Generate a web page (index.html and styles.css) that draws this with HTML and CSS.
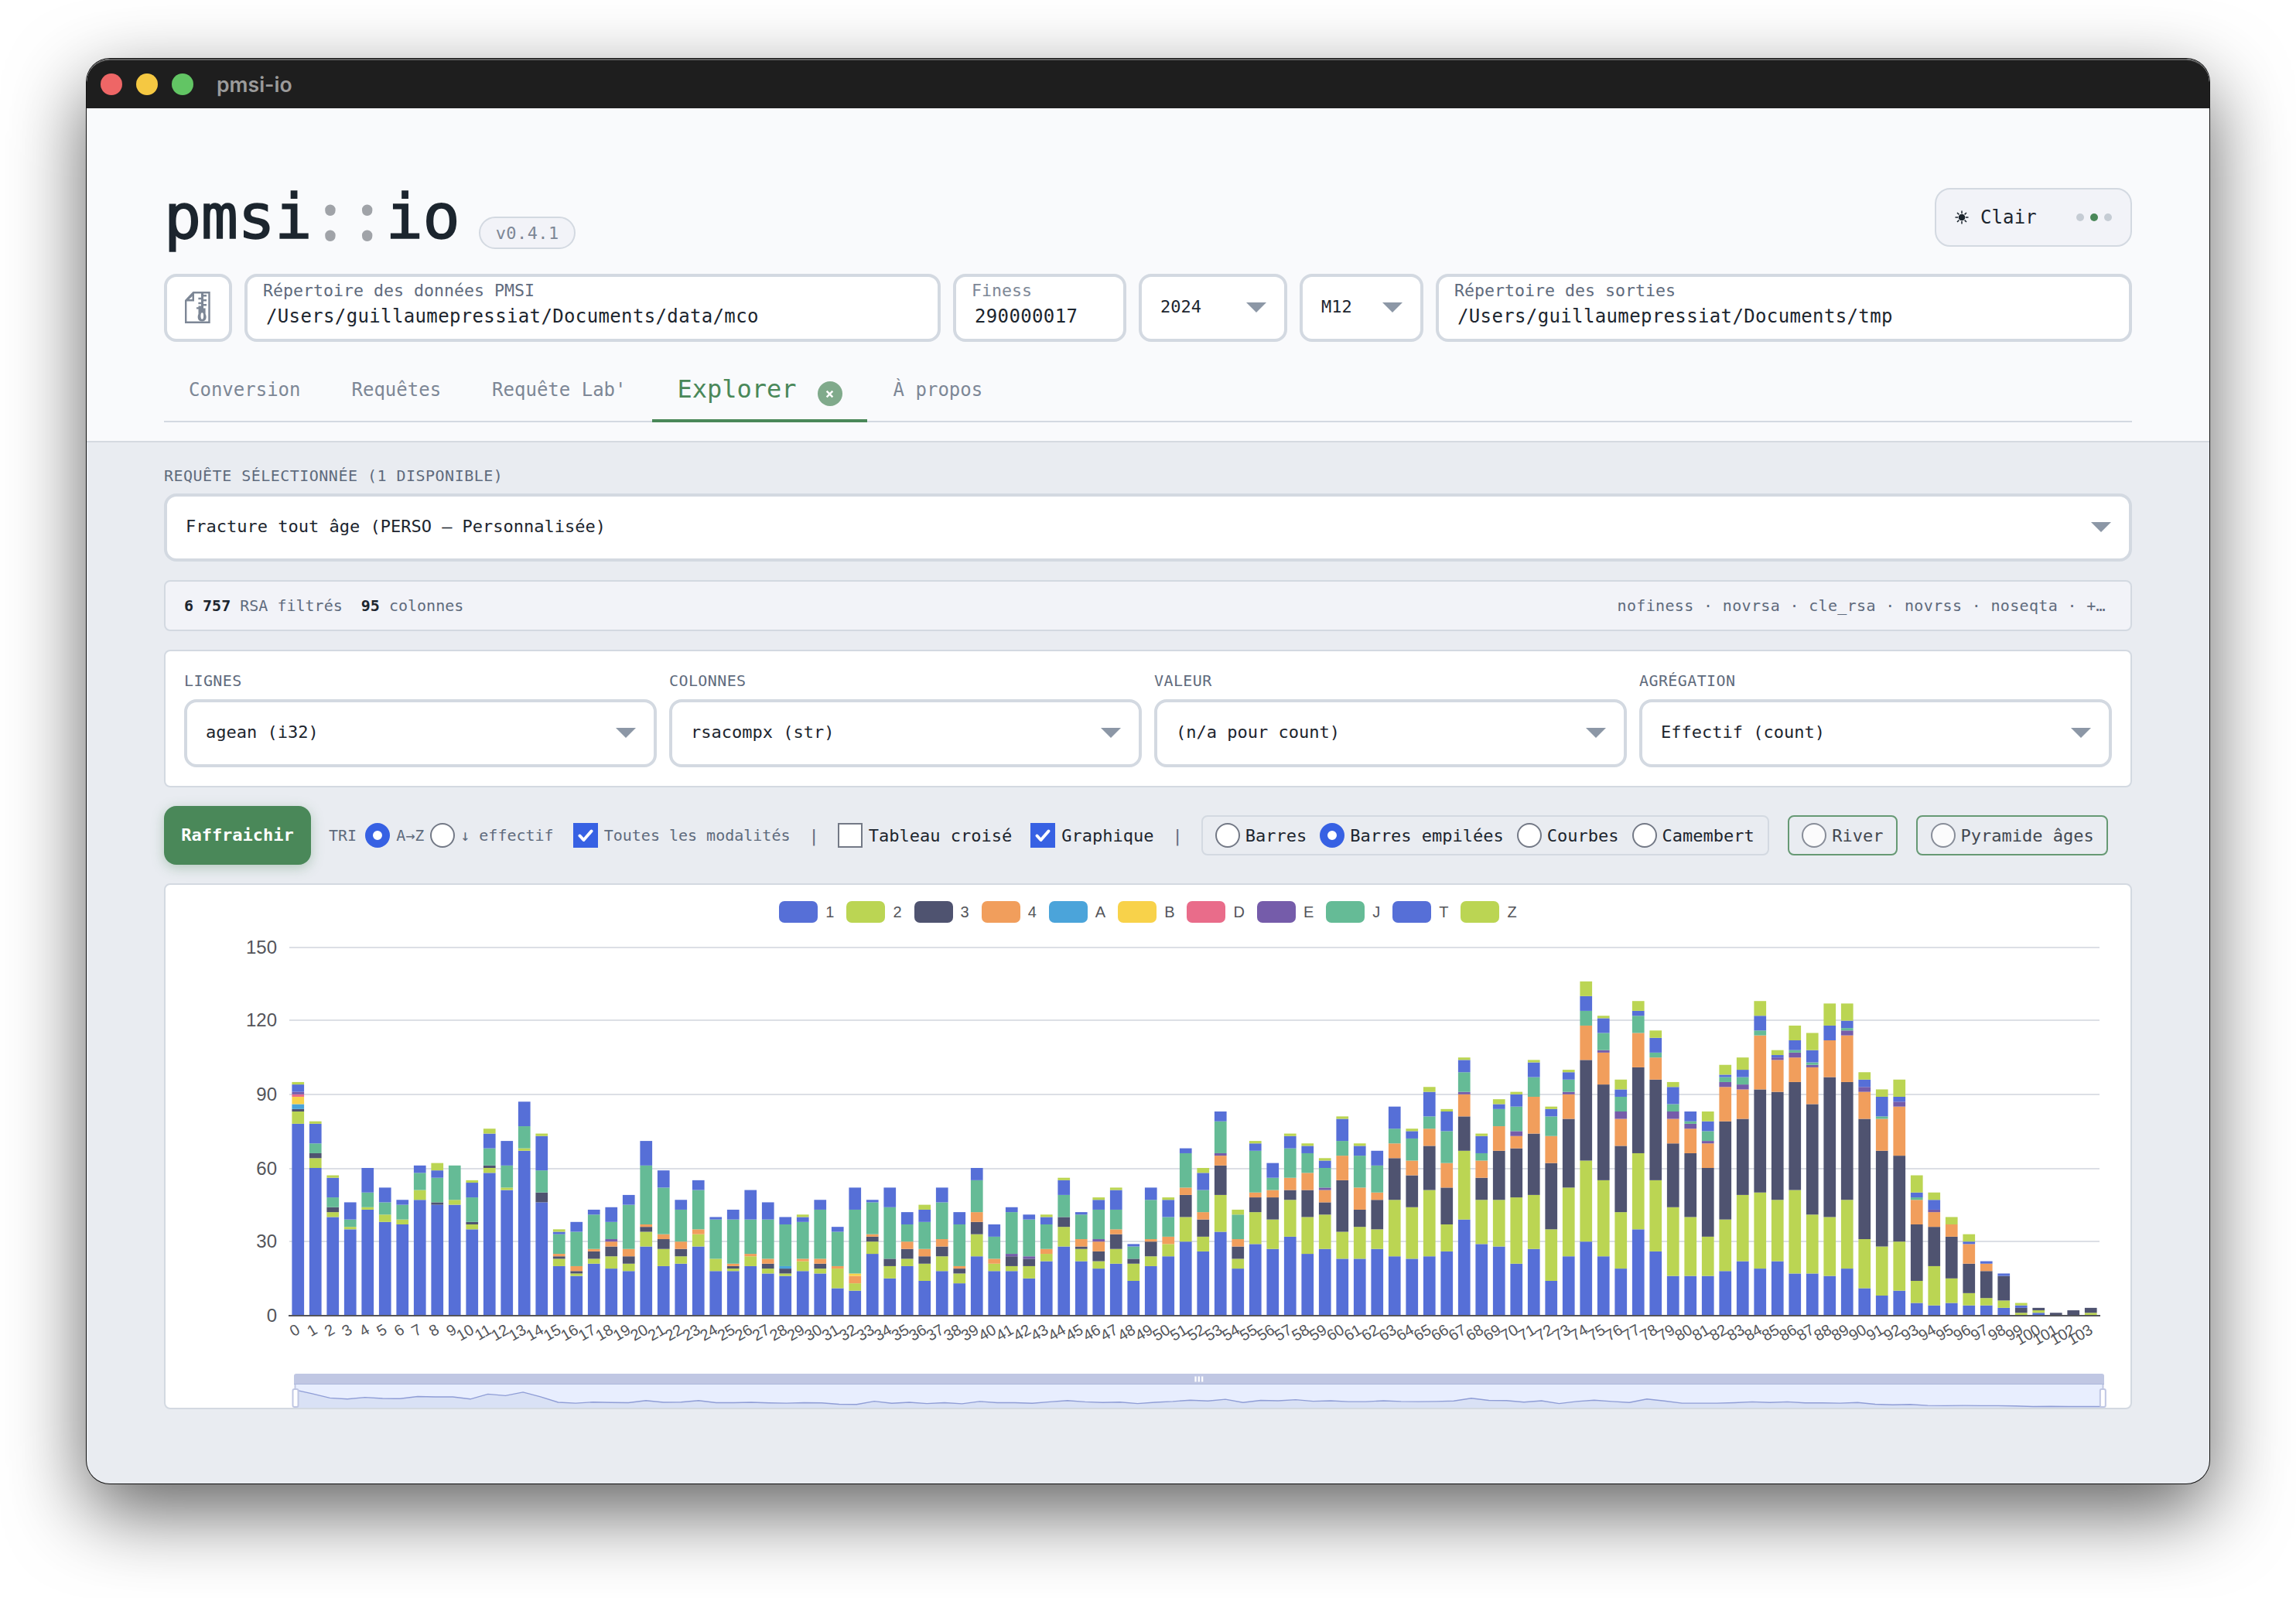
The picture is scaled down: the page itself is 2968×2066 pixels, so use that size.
FILE: index.html
```html
<!DOCTYPE html>
<html lang="fr">
<head>
<meta charset="utf-8">
<title>pmsi-io</title>
<link rel="stylesheet" href="styles.css">
</head>
<body>
<div class="window">
  <div class="titlebar">
    <span class="light red"></span><span class="light yellow"></span><span class="light green"></span>
    <span class="window-title">pmsi-io</span>
  </div>
  <header class="header">
    <div class="brand-row">
      <h1 class="brand">pmsi<span class="colon">:</span><span class="colon">:</span>io</h1>
      <span class="version">v0.4.1</span>
      <button class="theme"><svg class="sun" viewBox="0 0 18 18"><circle cx="9" cy="9" r="3.6"/><path d="M9 0.5V4M9 14V17.5M0.5 9H4M14 9H17.5M3 3L5.4 5.4M12.6 12.6L15 15M3 15L5.4 12.6M12.6 5.4L15 3"/></svg>Clair<span class="dots"><i></i><i class="on"></i><i></i></span></button>
    </div>
    <div class="fields">
      <div class="box zip"><svg width="34" height="42" viewBox="0 0 34 42"><path class="line" d="M1.2 11.5L11 1.2H31.5V39.8H1.2Z"/><path class="fold" d="M1 12.5L12 1V12.5ZM5.5 10H9.5V6Z"/><path class="solid" d="M21 1h3v3h4v2.400h-4v3.600h4v2.400h-4v3.600h4v2.400h-4v3h2.600v7.500c2 3.600 1.200 9.600-4.400 9.600c-5.800 0-6.400-6-4.700-9.600v-6.300h-2.500v-2.400h2.500v-1.600h3.500v-2.400h-3.600v-2.400h3.600v-3.600h-3.600v-2.400h3.600z"/><ellipse cx="22.300" cy="31.500" rx="1.800" ry="4.200" fill="#fff"/></svg></div>
      <div class="box path"><span class="lbl">Répertoire des données PMSI</span><span class="val">/Users/guillaumepressiat/Documents/data/mco</span></div>
      <div class="box finess"><span class="lbl light-lbl">Finess</span><span class="val">290000017</span></div>
      <div class="box select year">2024<i class="arrow"></i></div>
      <div class="box select month">M12<i class="arrow"></i></div>
      <div class="box path"><span class="lbl">Répertoire des sorties</span><span class="val">/Users/guillaumepressiat/Documents/tmp</span></div>
    </div>
    <nav class="tabs">
      <a class="tab">Conversion</a><a class="tab">Requêtes</a><a class="tab">Requête Lab'</a><a class="tab active">Explorer<span class="close"><svg viewBox="0 0 10 10"><path d="M1.500 1.500L8.500 8.500M8.500 1.500L1.500 8.500"/></svg></span></a><a class="tab">À propos</a>
    </nav>
  </header>
  <main class="main">
    <div class="caption">REQUÊTE SÉLECTIONNÉE (1 DISPONIBLE)</div>
    <div class="box select query">Fracture tout âge (PERSO – Personnalisée)<i class="arrow"></i></div>
    <div class="info"><span><b>6 757</b> RSA filtrés&nbsp; <b>95</b> colonnes</span><span class="cols">nofiness · novrsa · cle_rsa · novrss · noseqta · +…</span></div>
    <div class="pivot">
      <div><div class="pivot-label">LIGNES</div><div class="box select">agean (i32)<i class="arrow"></i></div></div>
      <div><div class="pivot-label">COLONNES</div><div class="box select">rsacompx (str)<i class="arrow"></i></div></div>
      <div><div class="pivot-label">VALEUR</div><div class="box select">(n/a pour count)<i class="arrow"></i></div></div>
      <div><div class="pivot-label">AGRÉGATION</div><div class="box select">Effectif (count)<i class="arrow"></i></div></div>
    </div>
    <div class="controls">
      <button class="refresh">Raffraichir</button>
      <div class="sort"><span class="sort-title">TRI</span><i class="radio on"></i><span>A→Z</span><i class="radio"></i><span>↓ effectif</span></div>
      <label class="opt small"><i class="check on"><svg viewBox="0 0 32 32"><path d="M8.500 16.500L13.500 22L23.500 10.500"/></svg></i>Toutes les modalités</label>
      <span class="bar">|</span>
      <label class="opt"><i class="check"></i>Tableau croisé</label>
      <label class="opt"><i class="check on"><svg viewBox="0 0 32 32"><path d="M8.500 16.500L13.500 22L23.500 10.500"/></svg></i>Graphique</label>
      <span class="bar">|</span>
      <div class="kinds">
        <label class="kind"><i class="radio"></i>Barres</label><label class="kind"><i class="radio on"></i>Barres empilées</label><label class="kind"><i class="radio"></i>Courbes</label><label class="kind"><i class="radio"></i>Camembert</label>
      </div>
      <label class="kind framed"><i class="radio"></i>River</label>
      <label class="kind framed"><i class="radio"></i>Pyramide âges</label>
    </div>
    <section class="chart">
      <div class="legend" id="legend"></div>
      <svg id="plot" class="plot" viewBox="214 1193 2540 627" width="2540" height="627"></svg>
    </section>
  </main>
</div>
<script src="chart.js"></script>
</body>
</html>
```
FILE: chart.js
```js
// Palette of each complexity code, in stacking order.
const colors = { 1: "#566fd7", 2: "#bbd553", 3: "#4f5370", 4: "#f19e5c", A: "#4ba4da", B: "#f8d24a", D: "#e96c8a", E: "#755caa", J: "#65bb96", T: "#566fd7", Z: "#bbd553" };

// One entry per age: code followed by the cumulated height of the stack.
const rows = `1:78 2:83 3:84 A:86 B:89 D:90 E:91 T:94 Z:95|1:60 2:64 3:66 J:70 T:78 Z:79|1:40 2:42 3:44 J:48 T:56 Z:57|1:35 2:36 J:39 T:46|1:43 2:44 J:50 T:60|1:38 2:41 J:46 T:52|1:37 2:39 J:45 T:47|1:47 2:51 J:58 T:61|1:45 3:46 J:56 T:59 Z:62|1:45 2:47 J:61|1:35 2:37 3:38 J:48 T:54 Z:55|1:58 2:60 3:61 J:68 T:74 Z:76|1:51 2:52 J:61 T:71|1:67 2:68 J:77 T:87|1:46 3:50 J:59 T:73 Z:74|1:20 2:23 3:24 4:25 J:33 T:34 Z:35|1:16 2:17 3:18 4:20 J:34 T:38|1:21 2:23 3:26 4:27 J:41 T:43|1:19 2:24 3:28 4:30 E:31 J:38 T:44|1:18 2:21 3:24 4:27 J:45 T:49|1:28 2:34 3:36 4:37 J:61 T:71|1:20 2:27 3:31 4:33 J:52 T:59|1:21 2:24 3:27 4:30 J:43 T:47|1:28 2:33 4:35 J:51 T:55|1:18 2:23 J:39 T:40|1:18 2:19 3:20 4:21 J:39 T:43|1:20 2:24 4:25 J:39 T:51|1:17 2:19 3:21 4:23 J:39 T:46|1:16 2:17 3:19 A:20 J:37 T:40|1:18 2:22 4:23 J:38 T:40 Z:41|1:17 2:19 3:21 4:23 J:43 T:47|1:11 2:19 4:20 J:34 T:36|1:10 2:13 4:16 B:17 J:43 T:52|1:25 2:30 3:32 4:33 J:46 T:47|1:15 2:20 3:23 J:44 T:52|1:20 2:23 3:27 4:30 J:37 T:42|1:14 2:21 3:24 4:27 J:38 T:43 Z:45|1:18 2:24 3:28 4:31 J:46 T:52|1:13 2:17 3:19 4:20 J:37 T:42|1:24 2:33 3:38 4:42 J:55 T:60|1:18 2:21 4:23 J:32 T:37|1:18 2:20 3:24 E:25 J:42 T:44|1:15 2:20 3:23 E:24 J:39 T:41|1:22 2:25 4:27 J:37 T:40 Z:41|1:28 2:36 3:40 J:49 T:55 Z:56|1:22 2:27 3:28 4:31 J:41 T:42|1:19 2:22 3:26 4:30 E:31 J:43 T:47 Z:48|1:21 2:27 3:33 4:35 J:43 T:51 Z:52|1:14 2:21 3:23 J:28 T:29|1:20 2:24 3:30 4:31 J:47 T:52|1:24 2:29 4:32 J:40 T:47 Z:48|1:30 2:40 3:49 4:52 J:66 T:68|1:26 2:32 3:39 4:42 J:51 T:58 Z:60|1:34 2:49 3:61 4:65 E:66 J:79 T:83|1:19 2:23 3:28 4:31 J:41 Z:43|1:29 2:42 3:48 4:50 J:67 T:70 Z:71|1:27 2:39 3:48 4:51 J:56 T:62|1:32 2:47 3:51 4:56 J:68 T:73 Z:74|1:25 2:40 3:51 4:58 J:66 T:69 Z:70|1:27 2:41 3:46 4:51 E:52 J:60 T:63 Z:64|1:23 2:34 3:55 4:65 J:71 T:80 Z:81|1:23 2:36 3:43 4:52 J:65 T:69 Z:70|1:27 2:35 3:47 4:50 J:61 T:67|1:24 2:47 3:64 4:70 J:76 T:85|1:23 2:44 3:57 4:63 J:72 T:75 Z:76|1:24 2:51 3:69 4:76 J:81 T:91 Z:93|1:26 2:37 3:52 4:62 J:75 T:83 Z:84|1:39 2:67 3:81 4:90 E:91 J:99 T:104 Z:105|1:29 2:47 3:56 4:63 J:66 T:73 Z:74|1:28 2:47 3:67 4:77 J:84 T:86 Z:88|1:21 2:48 3:68 4:73 E:75 J:85 T:90 Z:91|1:27 2:49 3:74 4:89 J:97 T:103 Z:104|1:14 2:35 3:62 4:73 J:81 T:84 Z:85|1:24 2:52 3:80 4:90 E:91 J:96 T:99 Z:100|1:30 2:63 3:104 4:118 J:124 T:130 Z:136|1:24 2:55 3:94 4:107 E:108 J:115 T:121 Z:122|1:19 2:42 3:69 4:80 E:83 J:89 T:92 Z:96|1:35 2:66 3:101 4:115 J:122 T:124 Z:128|1:26 2:55 3:96 4:105 J:107 T:113 Z:116|1:16 2:44 3:70 4:80 E:83 J:86 T:93 Z:95|1:16 2:40 3:66 4:76 E:78 J:79 T:83|1:16 2:32 3:60 4:70 E:71 J:75 T:79 Z:83|1:18 2:39 3:79 4:93 E:95 J:97 T:98 Z:102|1:22 2:49 3:80 4:92 E:94 J:97 T:100 Z:105|1:19 2:50 3:92 4:114 J:116 T:122 Z:128|1:22 2:47 3:91 4:104 E:105 T:106 Z:108|1:17 2:51 3:95 4:105 E:107 J:108 T:112 Z:118|1:17 2:41 3:86 4:101 E:102 J:103 T:108 Z:115|1:16 2:40 3:97 4:112 T:118 Z:127|1:19 2:47 3:95 4:114 E:116 J:117 T:120 Z:127|1:11 2:31 3:80 4:91 E:93 T:96 Z:99|1:8 2:28 3:67 4:80 J:81 T:89 Z:92|1:10 2:30 3:65 4:85 E:87 T:89 Z:96|1:5 2:14 3:37 4:47 J:48 T:50 Z:57|1:4 2:20 3:36 4:42 E:43 T:47 Z:50|1:5 2:15 3:32 4:37 Z:40|1:4 2:9 3:21 4:29 T:30 Z:33|1:4 2:7 3:18 4:21 T:22|1:3 2:6 3:16 T:17|2:1 3:3 T:4 Z:5|1:1 2:2 3:3|3:1|3:2|2:1 3:3`.split("|");

document.getElementById("legend").innerHTML = ["1", "2", "3", "4", "A", "B", "D", "E", "J", "T", "Z"]
  .map(k => `<span class="key"><i style="background:${colors[k]}"></i>${k}</span>`).join("");

const X0 = 374, BAND = 22.5, BASE = 1700.4, UNIT = 476 / 150;
let out = "";
[[150, 1225], [120, 1319], [90, 1415], [60, 1511], [30, 1605], [0, 1701]].forEach(([v, y]) => {
  if (v) out += `<path class="grid" d="M${X0} ${y}H2714"/>`;
  out += `<text class="ytick" x="358" y="${y + 8}">${v}</text>`;
});
const first = [];
rows.forEach((row, i) => {
  const x = X0 + i * BAND + 3.4;
  let from = 0, one = 0;
  row.split(" ").forEach(part => {
    const [k, v] = part.split(":");
    if (k === "1") one = +v;
    const h = (v - from) * UNIT;
    out += `<rect x="${x.toFixed(2)}" y="${(BASE - v * UNIT).toFixed(2)}" width="15.7" height="${h.toFixed(2)}" fill="${colors[k]}"/>`;
    from = +v;
  });
  first.push(`${(381 + i * 22.7).toFixed(1)} ${(1818.5 - one * 0.277).toFixed(1)}`);
  out += `<text class="xtick" transform="translate(${(X0 + (i + 0.5) * BAND + 0.5).toFixed(2)} 1717) rotate(-30)" dy="7">${i}</text>`;
});
out += `<path class="axis" d="M373 1701H2715"/>`;

// Range slider with the shadow of the first series.
out += `<rect x="381" y="1789" width="2338" height="31" fill="#e8eefe"/>
<path d="M381 1820L${first.join("L")}V1820Z" fill="#d9e1f5"/>
<path d="M${first.join("L")}" class="shadow-line"/>
<path d="M380 1790V1779Q380 1776 383 1776H2717Q2720 1776 2720 1779V1790Z" fill="#c0c7e3"/>
<path d="M380 1789.500H2720" stroke="#adb8da" stroke-width="1"/>
<path d="M381.500 1790V1796M2718.500 1790V1796" stroke="#c0c7e3" stroke-width="2"/>
<rect class="handle" x="378.500" y="1796" width="7" height="23" rx="2"/>
<rect class="handle" x="2714.800" y="1796" width="7" height="23" rx="2"/>
<path d="M1545.500 1779.500V1786.500M1549.800 1779.500V1786.500M1554.200 1779.500V1786.500" stroke="#fff" stroke-width="2.200"/>`;
document.getElementById("plot").innerHTML = out;
```
FILE: styles.css
```css
* { box-sizing: border-box; }
html, body { margin: 0; background: #fff; }
body { width: 2968px; height: 2066px; overflow: hidden; padding: 76px 112px; font-family: "DejaVu Sans Mono", monospace; color: #1c252e; }
i { font-style: normal; }
button { font: inherit; color: inherit; margin: 0; }

.window { width: 2744px; height: 1842px; border-radius: 30px; overflow: hidden; background: #e9ecf1; box-shadow: 0 0 0 1px #111, 0 36px 100px rgba(0, 0, 0, .62); }
.titlebar { height: 64px; background: #1e1e1e; display: flex; align-items: center; padding-left: 18px; gap: 18px; border-top: 2px solid #5c5c5c; border-radius: 30px 30px 0 0; }
.light { width: 28px; height: 28px; border-radius: 50%; }
.red { background: #ee6666; }
.yellow { background: #f5c842; }
.green { background: #62c564; }
.window-title { margin-left: 12px; font: 600 26.6px Inter, sans-serif; color: #9b9b9b; }

.header { height: 432px; background: #f9fafc; padding: 103px 100px 0; border-bottom: 2px solid #d5dae0; }
.brand-row { display: flex; align-items: center; height: 76px; }
.brand { margin: 0; display: flex; font-size: 80px; font-weight: 400; letter-spacing: -.4px; line-height: 76px; -webkit-text-stroke: 1.6px #1c252e; margin-top: -1px; }
.colon { width: 47.8px; text-align: center; font-family: "Noto Sans", sans-serif; font-size: 76px; letter-spacing: 0; color: #a0a3a8; -webkit-text-stroke: 4px #a0a3a8; margin-top: -1px; }
.version { margin: 40px 0 0 25px; height: 42px; width: 125px; border: 2px solid #d3d9e1; border-radius: 21px; background: #f2f3f8; color: #7d8796; font-size: 22px; letter-spacing: .44px; text-align: center; line-height: 40px; }
.theme { margin-left: auto; width: 255px; height: 76px; border: 2px solid #d3d9e1; border-radius: 20px; background: #f2f3f8; padding: 0 24px; display: flex; align-items: center; font-size: 24px; letter-spacing: .1px; }
.sun { width: 18px; height: 18px; margin-right: 15px; fill: #1c252e; stroke: #1c252e; stroke-width: 1.5; }
.dots { margin-left: auto; display: flex; gap: 8px; }
.dots i { width: 10px; height: 10px; border-radius: 50%; background: #c5ccd4; }
.dots .on { background: #4a8859; }

.box { height: 88px; border: 4px solid #d3d9e1; border-radius: 16px; background: #fff; }
.fields { display: flex; gap: 16px; margin-top: 35px; }
.zip { width: 88px; display: flex; align-items: center; justify-content: center; }
.line { fill: none; stroke: #7d8796; stroke-width: 2.4; }
.fold, .solid { fill: #7d8796; fill-rule: evenodd; }
.path { flex: 1; }
.finess { width: 224px; }
.path, .finess { display: flex; flex-direction: column; padding: 4px 0 0 20px; }
.lbl { font-size: 21.6px; line-height: 28px; color: #5f6b7d; }
.light-lbl { color: #7d8796; }
.val { font-size: 24px; letter-spacing: .36px; line-height: 36px; padding: 1px 0 0 4px; }
.select { display: flex; align-items: center; justify-content: space-between; padding: 0 23px 4px 24px; font-size: 22px; white-space: pre; }
.year { width: 192px; }
.month { width: 160px; }
.arrow { border: 13px solid transparent; border-top-color: #8c97a6; border-bottom: 0; margin-top: 2px; }

.tabs { display: flex; gap: 2px; margin-top: 22px; height: 82px; border-bottom: 2px solid #d3d9e1; color: #7d8796; font-size: 24px; }
.tab { height: 82px; line-height: 80px; padding: 0 32px; }
.active { display: flex; align-items: center; color: #4a8859; font-size: 32px; border-bottom: 4px solid #4a8859; }
.close { margin: 12px 0 0 27px; width: 32px; height: 32px; border-radius: 50%; background: #80aa8b; display: flex; align-items: center; justify-content: center; }
.close svg { width: 11px; height: 11px; stroke: #fff; stroke-width: 2.2; }

.main { padding: 30px 100px 0; }
.caption { font-size: 20px; letter-spacing: .48px; line-height: 26px; margin-bottom: 10px; color: #5f6b7d; }
.info { margin-top: 24px; height: 66px; border: 2px solid #d3d9e1; border-radius: 8px; background: #f2f3f8; padding: 0 32px 0 24px; display: flex; align-items: center; justify-content: space-between; font-size: 20px; color: #5f6b7d; }
.info b { color: #1c252e; }
.cols { letter-spacing: .34px; }
.pivot { margin-top: 24px; height: 178px; border: 2px solid #d3d9e1; border-radius: 8px; background: #fff; padding: 24px; display: grid; grid-template-columns: repeat(4, 1fr); gap: 16px; }
.pivot-label { font-size: 20px; letter-spacing: .4px; line-height: 28px; margin-bottom: 10px; color: #5f6b7d; }

.controls { display: flex; align-items: center; gap: 24px; height: 76px; margin-top: 24px; font-size: 22px; white-space: pre; }
.refresh { width: 190px; height: 76px; padding: 0 0 2px; border: 0; border-radius: 16px; background: #4a8859; color: #fff; font-weight: 700; box-shadow: 0 4px 16px rgba(74, 136, 89, .35); margin-right: -1px; }
.sort { display: flex; align-items: center; font-size: 20px; color: #5f6b7d; margin-right: 1px; }
.sort-title { margin-right: 3px; }
.sort span + .radio { margin-left: 8px; }
.sort .on { margin-right: 8px; }
.radio { width: 32px; height: 32px; flex: none; border-radius: 50%; border: 2px solid #737986; background: #fff; margin-right: 7px; }
.radio.on { border: 10px solid #3761e3; }
.opt, .kind { display: flex; align-items: center; }
.small { font-size: 20px; color: #5f6b7d; }
.check { width: 32px; height: 32px; border: 2px solid #737986; background: #fff; margin-right: 8px; }
.check.on { border: 0; background: #3761e3; }
.check svg { display: block; fill: none; stroke: #fff; stroke-width: 4; stroke-linecap: round; stroke-linejoin: round; }
.bar { color: #5f6b7d; }
.kinds { display: flex; gap: 17px; height: 52px; padding: 0 17px 0 16px; border: 2px solid #d3d9e1; border-radius: 8px; align-items: center; }
.framed { height: 52px; padding: 0 16.5px; border: 2px solid #4a8859; border-radius: 8px; opacity: .82; }

.chart { margin-top: 24px; height: 680px; border: 2px solid #d3d9e1; border-radius: 8px; background: #fff; overflow: hidden; }
.legend { height: 49px; padding-top: 21px; display: flex; justify-content: center; gap: 16px; font: 20px "Liberation Sans", sans-serif; color: #54555a; }
.key { display: flex; align-items: center; height: 28px; }
.key i { width: 50px; height: 28px; border-radius: 7px; margin-right: 10px; }
.plot { display: block; }
.grid { stroke: #dcdfe5; stroke-width: 2; }
.axis { stroke: #54555a; stroke-width: 2; }
.ytick, .xtick { font-family: "Liberation Sans", sans-serif; fill: #54555a; text-anchor: end; }
.ytick { font-size: 24px; }
.xtick { font-size: 20px; }
.shadow-line { fill: none; stroke: #8f9dd6; stroke-width: 1.4; }
.handle { fill: #fff; stroke: #c0c7e3; stroke-width: 2; }
```
